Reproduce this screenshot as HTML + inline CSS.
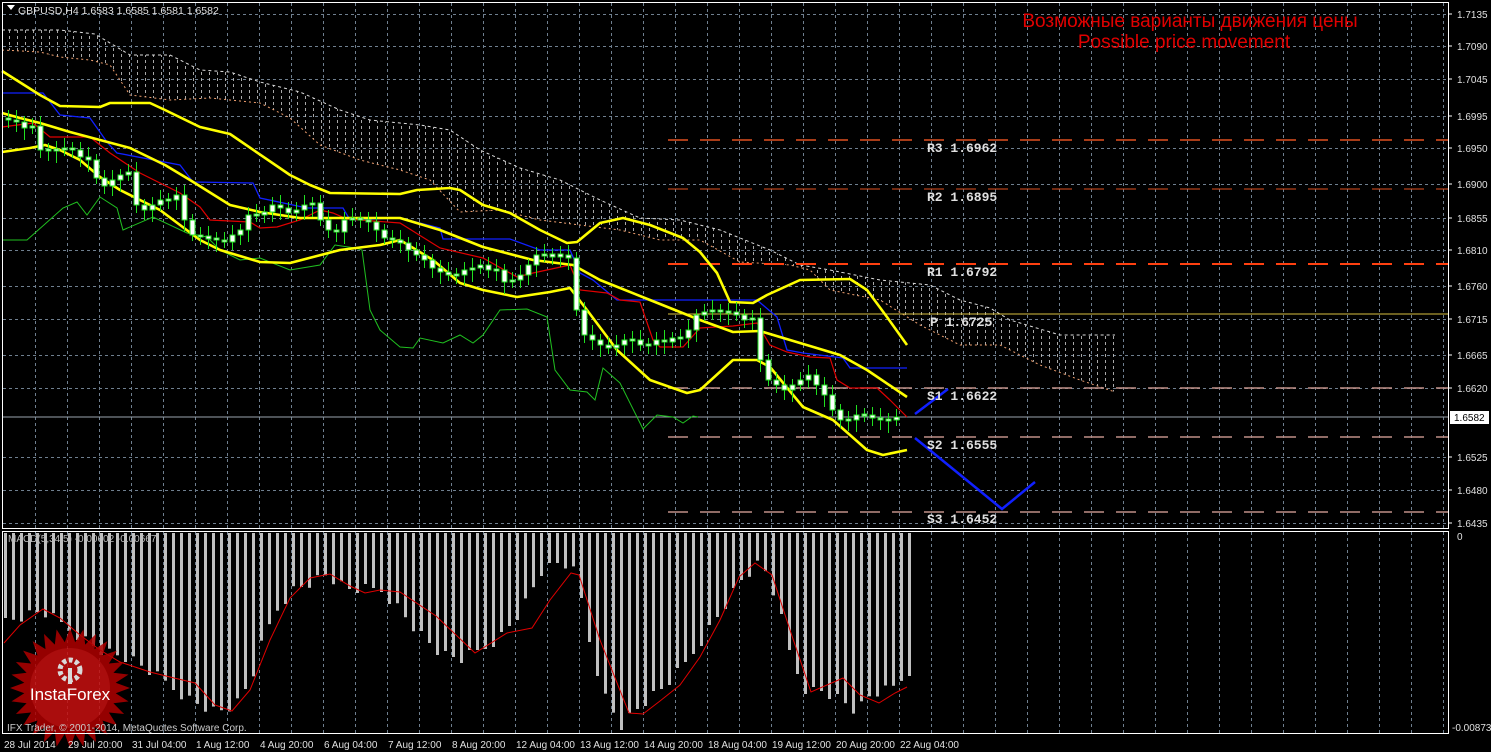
<!DOCTYPE html>
<html><head><meta charset="utf-8"><style>
html,body{margin:0;padding:0;background:#000;width:1491px;height:752px;overflow:hidden}
svg{display:block}
text{font-family:"Liberation Sans",sans-serif}
text.mono{font-family:"Liberation Mono",monospace;font-weight:bold;font-size:13px}
</style></head><body>
<svg id="s" width="1491" height="752" xmlns="http://www.w3.org/2000/svg">
<defs>
<pattern id="cl" width="8" height="6" patternUnits="userSpaceOnUse"><rect x="1" y="0" width="1" height="3" fill="#bbb"/></pattern>
</defs>
<rect width="1491" height="752" fill="#000"/>
<g id="grid" stroke="#6f7f8f" stroke-width="1" stroke-dasharray="3,3"></g>
<polygon fill="url(#cl)" opacity="0.9" points="2,30 60,30 95,34 105,40 130,55 170,55 200,70 230,72 260,82 300,92 340,110 370,120 420,125 450,130 480,150 520,168 560,180 600,200 640,218 680,220 720,230 770,250 800,265 830,270 880,280 930,285 960,300 990,308 1010,320 1060,335 1115,335 1115,392 1080,380 1040,365 1000,345 960,345 920,325 880,300 830,290 810,270 790,265 740,262 700,240 660,240 620,230 580,225 540,220 500,210 460,212 430,180 400,170 360,160 320,145 290,118 260,103 210,98 170,100 130,95 110,65 90,60 60,57 40,52 2,50"/>
<polyline fill="none" stroke="#ddd" stroke-width="1" stroke-dasharray="3,3" points="2,30 60,30 95,34 105,40 130,55 170,55 200,70 230,72 260,82 300,92 340,110 370,120 420,125 450,130 480,150 520,168 560,180 600,200 640,218 680,220 720,230 770,250 800,265 830,270 880,280 930,285 960,300 990,308 1010,320 1060,335 1115,335"/>
<polyline fill="none" stroke="#f0a070" stroke-width="1" stroke-dasharray="2,3" points="2,50 40,52 60,57 90,60 110,65 130,95 170,100 210,98 260,103 290,118 320,145 360,160 400,170 430,180 460,212 500,210 540,220 580,225 620,230 660,240 700,240 740,262 790,265 810,270 830,290 880,300 920,325 960,345 1000,345 1040,365 1080,380 1115,392"/>
<line x1="668" y1="140" x2="1448" y2="140" stroke="#e05020" stroke-width="1.5" stroke-dasharray="20,12"/>
<line x1="668" y1="189" x2="1448" y2="189" stroke="#e05020" stroke-width="1" stroke-dasharray="20,12"/>
<line x1="668" y1="264" x2="1448" y2="264" stroke="#ff4010" stroke-width="2" stroke-dasharray="20,12"/>
<line x1="668" y1="314" x2="1448" y2="314" stroke="#d8c040" stroke-width="1"/>
<line x1="668" y1="388" x2="1448" y2="388" stroke="#c09088" stroke-width="1.5" stroke-dasharray="20,12"/>
<line x1="2" y1="417" x2="1448" y2="417" stroke="#9aa4ae" stroke-width="1"/>
<line x1="668" y1="437" x2="1448" y2="437" stroke="#c09088" stroke-width="1.5" stroke-dasharray="20,12"/>
<line x1="668" y1="512" x2="1448" y2="512" stroke="#c09088" stroke-width="1.5" stroke-dasharray="20,12"/>
<polyline fill="none" stroke="#20c020" stroke-width="1" points="2,240 27,240 63,208 77,202 87,215 100,197 117,208 123,230 153,217 187,233 207,237 220,250 240,260 260,258 290,270 320,265 335,245 355,248 362,250 370,310 380,330 400,347 413,348 420,338 443,343 460,335 473,343 483,335 500,310 527,309 547,317 555,370 570,390 587,392 595,400 603,368 620,383 643,429 657,415 673,417 683,423 693,416 698,417"/>
<polyline fill="none" stroke="#1020ff" stroke-width="1.3" points="2,93 43,93 60,115 90,118 107,142 117,153 180,165 193,182 253,183 260,198 307,208 343,208 350,220 400,218 440,228 443,239 510,239 540,250 570,250 580,273 593,280 617,300 757,300 777,317 787,350 803,353 843,358 850,368 907,368"/>
<polyline fill="none" stroke="#e00000" stroke-width="1.2" points="2,127 33,123 50,137 90,137 110,153 140,173 180,193 200,207 210,220 250,222 260,228 277,227 300,220 320,210 333,213 347,219 400,223 440,248 483,258 517,277 533,273 570,265 580,290 607,293 620,300 640,302 653,340 660,347 683,347 700,328 733,326 757,323 770,345 787,352 810,357 830,358 837,380 850,388 877,388 890,400 907,417"/>
<g fill="none" stroke="#ffff00" stroke-width="2.6" stroke-linejoin="round">
<polyline points="2,71 40,95 60,106 100,107 110,103 150,103 165,110 200,127 230,134 290,175 310,185 330,193 400,194 417,190 450,188 460,190 483,205 510,213 540,230 567,243 577,242 600,223 623,218 650,225 683,238 700,252 717,273 730,302 753,303 767,295 800,280 850,279 867,290 887,317 907,345"/>
<polyline points="2,113 20,118 40,123 70,132 100,140 130,148 165,165 190,180 230,205 260,212 300,218 400,218 440,230 483,247 533,260 573,265 600,280 650,300 700,320 733,332 760,331 800,343 840,355 867,370 907,397"/>
<polyline points="2,152 30,148 45,145 60,150 80,160 100,177 120,190 140,200 160,210 200,240 220,250 260,262 290,263 340,250 380,245 400,240 433,260 460,283 483,290 517,297 550,292 570,288 587,310 617,350 650,380 687,393 700,390 733,360 757,360 770,367 803,407 833,420 867,450 883,455 907,450"/>
</g>
<g id="candles"></g>
<polyline fill="none" stroke="#1020ff" stroke-width="2.5" points="915,414 948,389"/>
<polyline fill="none" stroke="#1020ff" stroke-width="2.5" points="915,438 1002,509 1035,482"/>
<g fill="#e0e0e0">
<text class="mono" x="927" y="152">R3 1.6962</text>
<text class="mono" x="927" y="201">R2 1.6895</text>
<text class="mono" x="927" y="276">R1 1.6792</text>
<text class="mono" x="930" y="326">P 1.6725</text>
<text class="mono" x="927" y="400">S1 1.6622</text>
<text class="mono" x="927" y="449">S2 1.6555</text>
<text class="mono" x="927" y="523">S3 1.6452</text>
</g>
<text x="1190" y="27" font-size="19" fill="#e00000" text-anchor="middle">Возможные варианты движения цены</text>
<text x="1184" y="48" font-size="19" fill="#e00000" text-anchor="middle">Possible price movement</text>
<polygon points="7,5 15,5 11,10" fill="#fff"/>
<text x="18" y="14" font-size="10.5" fill="#e0e0e0">GBPUSD,H4  1.6583 1.6585 1.6581 1.6582</text>
<g id="bars" fill="#c0c0c0"></g>
<polyline fill="none" stroke="#e00000" stroke-width="1" points="4,643 20,625 43,609 60,618 80,635 100,650 120,662 150,672 170,677 195,683 215,705 232,711 250,690 270,640 290,598 310,578 330,574 350,586 365,593 380,590 400,592 436,616 475,653 507,633 532,628 550,600 571,573 579,575 600,640 629,713 643,714 660,701 680,685 700,657 720,620 739,577 755,563 772,575 790,630 811,692 843,678 860,695 879,703 895,693 907,687"/>
<text x="8" y="542" font-size="10" fill="#bbb">MACD(5,34,5) -0.00602 -0.00667</text>
<g id="logo" opacity="0.85"></g>
<text x="70" y="700" font-size="17" fill="#fff" text-anchor="middle">InstaForex</text>
<text x="7" y="731" font-size="10" fill="#ccc">IFX Trader, © 2001-2014, MetaQuotes Software Corp.</text>
<rect x="2.5" y="2.5" width="1446" height="526" fill="none" stroke="#fff" stroke-width="1"/>
<rect x="2.5" y="531.5" width="1446" height="202" fill="none" stroke="#fff" stroke-width="1"/>
<rect x="1450" y="411" width="39" height="13" fill="#fff"/>
<text x="1454" y="421" font-size="10" fill="#000">1.6582</text>
<g id="axis" font-size="10" fill="#e0e0e0"></g>
<g id="time" font-size="10" fill="#e0e0e0"></g>
</svg>
<script>
var NS="http://www.w3.org/2000/svg";
function el(p,t,a,txt){var e=document.createElementNS(NS,t);for(var k in a)e.setAttribute(k,a[k]);if(txt)e.textContent=txt;document.getElementById(p).appendChild(e);return e;}
var hy=[14,46,79,116,148,184,218,250,286,319,355,388,457,490,523];
for(var x=35;x<1448;x+=32){el("grid","line",{x1:x+.5,y1:3,x2:x+.5,y2:528});el("grid","line",{x1:x+.5,y1:532,x2:x+.5,y2:733});}
hy.forEach(function(y){el("grid","line",{x1:3,y1:y+.5,x2:1448,y2:y+.5});});
var lab=["1.7135","1.7090","1.7045","1.6995","1.6950","1.6900","1.6855","1.6810","1.6760","1.6715","1.6665","1.6620","1.6525","1.6480","1.6435"];
hy.forEach(function(y,i){el("axis","text",{x:1457,y:y+4},lab[i]);el("axis","line",{x1:1448,y1:y,x2:1452,y2:y,stroke:"#fff"});});
el("axis","text",{x:1457,y:540},"0");el("axis","text",{x:1452,y:731},"-0.00873");
var tl=["28 Jul 2014","29 Jul 20:00","31 Jul 04:00","1 Aug 12:00","4 Aug 20:00","6 Aug 04:00","7 Aug 12:00","8 Aug 20:00","12 Aug 04:00","13 Aug 12:00","14 Aug 20:00","18 Aug 04:00","19 Aug 12:00","20 Aug 20:00","22 Aug 04:00"];
tl.forEach(function(t,i){el("time","text",{x:4+i*64,y:748},t);});
var c=[118,120,122,128,126,150,150,150,148,150,157,160,178,186,180,175,172,205,210,205,200,200,195,220,235,237,238,240,242,235,230,215,215,212,205,208,213,210,205,203,220,230,232,220,218,220,222,230,238,240,243,250,255,260,268,272,275,275,270,268,265,270,270,282,280,275,265,255,255,256,255,258,310,335,340,345,348,345,340,340,345,345,340,342,338,338,330,315,312,310,312,312,315,320,318,360,380,385,390,385,380,375,385,395,410,420,420,415,415,418,420,420,417];
for(var i=1;i<c.length;i++){var x=8+(i-1)*8,o=c[i-1],cl=c[i];var t=Math.min(o,cl),b=Math.max(o,cl);if(b-t<2){t-=1;b+=1;}
el("candles","line",{x1:x+.5,y1:t-6-(i%3)*2,x2:x+.5,y2:b+6+(i%4)*2,stroke:"#20e020","stroke-width":1});
el("candles","rect",{x:x-2,y:t,width:5,height:b-t,fill:"#fff",stroke:"#20e020","stroke-width":1});}
var kp=[[4,622],[40,612],[70,630],[100,650],[130,660],[160,680],[190,700],[215,712],[235,705],[250,680],[262,640],[275,610],[290,590],[310,582],[325,575],[345,590],[380,590],[395,605],[415,630],[440,655],[460,660],[480,650],[500,635],[520,610],[540,572],[560,562],[575,575],[590,650],[605,700],[620,725],[640,705],[660,690],[680,670],[700,640],[720,610],[740,580],[760,562],[775,600],[790,660],[805,690],[820,690],[840,700],[855,712],[870,695],[890,690],[908,670]];
function f(x){for(var j=1;j<kp.length;j++){if(x<=kp[j][0]){var a=kp[j-1],b=kp[j];return a[1]+(b[1]-a[1])*(x-a[0])/(b[0]-a[0]);}}return 670;}
for(var x=4;x<=908;x+=8){var y=f(x)+((x*7)%13)-6;el("bars","rect",{x:x,y:533,width:3,height:y-533});}
var pts=[],n=28;for(var k=0;k<n*2;k++){var r=k%2?46:60,a=k*Math.PI/n;pts.push((70+r*Math.cos(a)).toFixed(1)+","+(688+r*Math.sin(a)).toFixed(1));}
el("logo","polygon",{points:pts.join(" "),fill:"#b00000"});
el("logo","circle",{cx:70,cy:688,r:40,fill:"#c81010"});
el("logo","circle",{cx:70,cy:670,r:10,fill:"none",stroke:"#fff","stroke-width":5,"stroke-dasharray":"4,2.5"});
el("logo","rect",{x:68,y:668,width:4,height:16,fill:"#fff"});
</script>
</body></html>
